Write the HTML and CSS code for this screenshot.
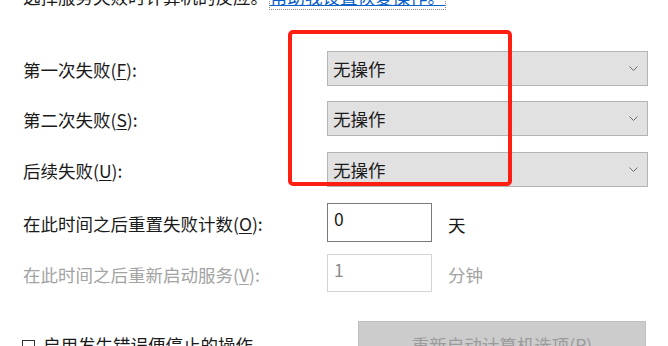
FILE: index.html
```html
<!DOCTYPE html>
<html lang="zh-CN">
<head>
    <meta charset="UTF-8">
    <meta name="viewport" content="width=device-width, initial-scale=1.0">
    <title>恢复</title>
    <link rel="stylesheet" href="styles.css">
</head>
<body>
    <p class="intro">选择服务失败时计算机的反应。<a href="#" class="help-link">帮助我设置恢复操作。</a></p>

    <div class="form">
        <div class="row row-select">
            <label class="label">第一次失败(<u>F</u>):</label>
            <div class="select"><span>无操作</span>
                <svg class="chevron" width="9" height="5" viewBox="0 0 9 5"><path d="M0.5 0.5 L4.5 4.5 L8.5 0.5" fill="none" stroke="#6b6b6b" stroke-width="1"/></svg>
            </div>
        </div>
        <div class="row row-select">
            <label class="label">第二次失败(<u>S</u>):</label>
            <div class="select"><span>无操作</span>
                <svg class="chevron" width="9" height="5" viewBox="0 0 9 5"><path d="M0.5 0.5 L4.5 4.5 L8.5 0.5" fill="none" stroke="#6b6b6b" stroke-width="1"/></svg>
            </div>
        </div>
        <div class="row row-select">
            <label class="label">后续失败(<u>U</u>):</label>
            <div class="select"><span>无操作</span>
                <svg class="chevron" width="9" height="5" viewBox="0 0 9 5"><path d="M0.5 0.5 L4.5 4.5 L8.5 0.5" fill="none" stroke="#6b6b6b" stroke-width="1"/></svg>
            </div>
        </div>
        <div class="row row-input">
            <label class="label">在此时间之后重置失败计数(<u>O</u>):</label>
            <div class="field">0</div>
            <span class="unit">天</span>
        </div>
        <div class="row row-input disabled">
            <label class="label">在此时间之后重新启动服务(<u>V</u>):</label>
            <div class="field">1</div>
            <span class="unit">分钟</span>
        </div>
        <div class="row row-bottom">
            <div class="check"><span class="box"></span>启用发生错误便停止的操作</div>
            <button class="restart" disabled>重新启动计算机选项(R)</button>
        </div>
    </div>

    <div class="highlight"></div>
</body>
</html>
```

FILE: styles.css
```css
* {
    margin: 0;
    padding: 0;
    box-sizing: border-box;
}
body {
    font-family: "Noto Sans CJK SC", "Noto Sans", sans-serif;
    font-size: 17.5px;
    color: #1a1a1a;
    background: #fff;
    width: 668px;
    height: 346px;
    overflow: hidden;
    position: relative;
    padding-left: 23px;
}
.intro {
    line-height: 20px;
    margin-top: -13px;
    white-space: nowrap;
}
.help-link {
    color: #0a5fc8;
    text-decoration: underline;
    outline: 1px dotted #888;
    outline-offset: 0;
    margin-left: 2px;
}
.form {
    margin-top: 44px;
}
.row {
    display: flex;
    align-items: center;
}
.label {
    width: 304px;
    padding-top: 3px;
    line-height: 20px;
}
.label u {
    text-decoration-thickness: 1px;
    text-underline-offset: 2px;
}
.row-select {
    height: 35px;
    margin-bottom: 15px;
}
.row-select:nth-child(2) {
    margin-bottom: 16px;
}
.select {
    width: 321px;
    height: 35px;
    background: #e1e1e1;
    border: 1px solid #b4b4b4;
    display: flex;
    align-items: center;
    justify-content: space-between;
    padding: 0 9px 0 5px;
    line-height: 20px;
}
.row-input {
    height: 39px;
}
.row-input:nth-child(4) {
    margin-top: 16px;
    margin-bottom: 12px;
}
.field {
    width: 105px;
    height: 39px;
    border: 1px solid #7a7a7a;
    padding: 5px 0 0 6px;
    line-height: 20px;
}
.unit {
    margin-left: 16px;
    padding-top: 3px;
}
.disabled {
    color: #a3a3a3;
    height: 38px;
}
.disabled .field {
    height: 38px;
    border-color: #d4d4d4;
    color: #8a8a8a;
}
.row-bottom {
    margin-top: 29px;
    align-items: flex-start;
}
.check {
    width: 336px;
    display: flex;
    align-items: center;
    margin-left: -1px;
    padding-top: 14px;
    line-height: 20px;
}
.box {
    width: 13px;
    height: 13px;
    border: 1px solid #333;
    margin-right: 8px;
    margin-top: 3px;
}
.restart {
    width: 288px;
    height: 40px;
    background: #cccccc;
    border: 1px solid #bfbfbf;
    color: #9b9b9b;
    font-family: inherit;
    font-size: 17.5px;
    line-height: 20px;
    padding-top: 8px;
}
.highlight {
    position: absolute;
    left: 288px;
    top: 30px;
    width: 224px;
    height: 156px;
    border: 4px solid #ff1e12;
    border-radius: 5px;
}
```
